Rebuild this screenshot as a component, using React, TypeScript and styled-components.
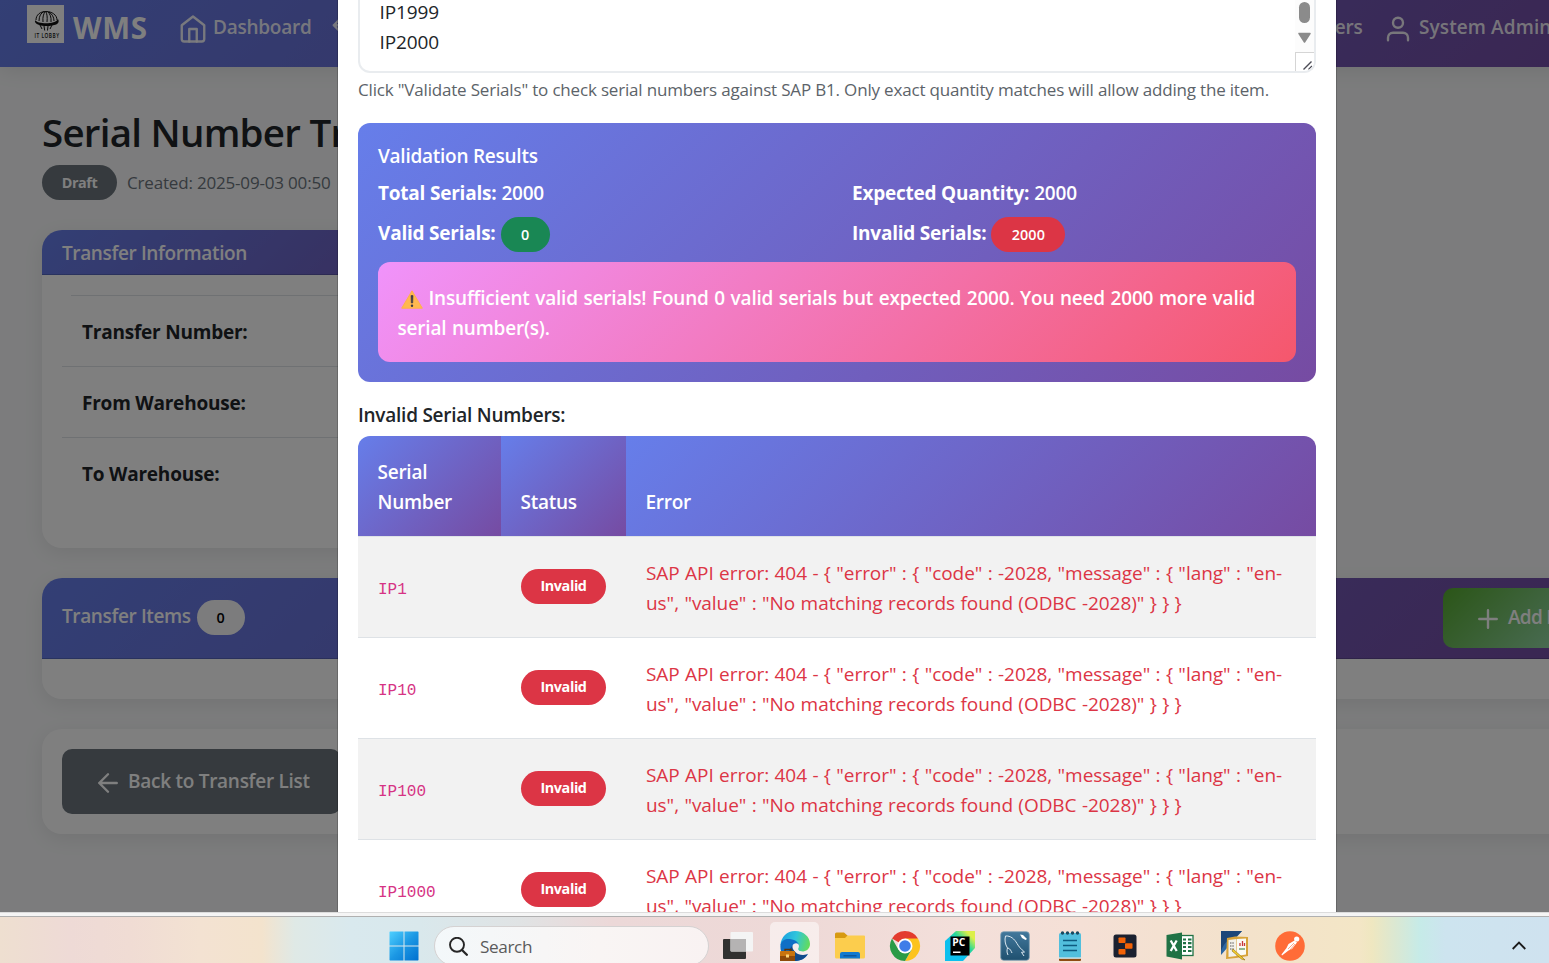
import React from 'react';
import styled, { createGlobalStyle, css } from 'styled-components';

const GlobalStyle = createGlobalStyle`
  * { box-sizing: border-box; }
  html, body { margin: 0; padding: 0; overflow: hidden; }
  body {
    font-family: 'Segoe UI', 'Open Sans', 'Noto Sans', sans-serif;
    font-size: 19px;
    line-height: 30px;
    color: #212529;
  }
`;

const brand = 'linear-gradient(135deg, #667eea 0%, #764ba2 100%)';

const Desktop = styled.div`
  display: flex;
  flex-direction: column;
  width: 1549px;
  height: 963px;
  overflow: hidden;
`;

const BrowserView = styled.div`
  position: relative;
  height: 912px;
  flex: none;
  overflow: hidden;
`;

const Page = styled.div`
  width: 1674px;
  height: 912px;
  background: #f8f9fa;
`;

/* ---------- navigation ---------- */

const Navbar = styled.nav`
  display: flex;
  align-items: flex-start;
  height: 67px;
  padding: 5px 27px;
  background: ${brand};
  box-shadow: 0 2px 20px rgba(0, 0, 0, 0.1);
  color: #fff;
`;

const Brand = styled.div`
  display: flex;
  gap: 9px;
  width: 151px;
  font-size: 29.5px;
  font-weight: 700;
  line-height: 46px;
  letter-spacing: 0.7px;
  white-space: nowrap;
`;

const NavItem = styled.div<{ $w: number }>`
  display: flex;
  flex: none;
  align-items: center;
  gap: 5px;
  width: ${(p) => p.$w}px;
  height: 43px;
  color: rgba(255, 255, 255, 0.9);
  font-weight: 600;
  letter-spacing: -0.25px;
  white-space: nowrap;
  svg { margin-top: 5px; flex: none; }
`;

const AccountItem = styled(NavItem)`
  gap: 6px;
  letter-spacing: 0.1px;
`;

const NavSpacer = styled.div`
  flex: 1;
`;

/* ---------- page content ---------- */

const Content = styled.main`
  padding: 41px 42px 0;
`;

const Title = styled.h1`
  margin: 0;
  height: 57px;
  font-size: 38.5px;
  font-weight: 600;
  line-height: 48px;
  letter-spacing: -0.75px;
`;

const Meta = styled.div`
  display: flex;
  align-items: center;
  gap: 10px;
  height: 35px;
  margin-bottom: 30px;
  color: #6c757d;
  font-size: 17px;
  letter-spacing: -0.18px;
`;

const Badge = styled.span<{ $bg: string; $fg?: string; $w: number }>`
  display: inline-flex;
  flex: none;
  align-items: center;
  justify-content: center;
  width: ${(p) => p.$w}px;
  height: 35px;
  border-radius: 18px;
  background: ${(p) => p.$bg};
  color: ${(p) => p.$fg ?? '#fff'};
  font-size: 14.4px;
  font-weight: 700;
  letter-spacing: -0.4px;
`;

const CountBadge = styled(Badge)`
  padding-top: 1px;
  font-weight: 600;
  letter-spacing: 0.1px;
`;

const Card = styled.section<{ $w?: number; $h: number }>`
  width: ${(p) => (p.$w ? `${p.$w}px` : '100%')};
  height: ${(p) => p.$h}px;
  margin-bottom: 30px;
  overflow: hidden;
  border-radius: 20px;
  background: #fff;
  box-shadow: 0 5px 20px rgba(0, 0, 0, 0.08);
`;

const CardHeader = styled.header<{ $h: number }>`
  display: flex;
  align-items: center;
  justify-content: space-between;
  height: ${(p) => p.$h}px;
  padding: 0 20px;
  border-bottom: 1px solid rgba(0, 0, 0, 0.18);
  background: ${brand};
  color: #fff;
  font-weight: 600;
  letter-spacing: -0.37px;
`;

const HeaderLabel = styled.div<{ $tall?: boolean }>`
  display: flex;
  align-items: center;
  gap: 6px;
  padding: ${(p) => (p.$tall ? '0 0 4px' : '2px 0 0')};
  ${CountBadge} { margin-top: 3px; }
`;

const InfoList = styled.dl`
  margin: 0;
  padding: 20px 20px 0;
`;

const InfoRow = styled.div<{ $first?: boolean; $last?: boolean }>`
  height: 71px;
  padding: 21px 20px 19px;
  border-bottom: ${(p) => (p.$last ? 'none' : '1px solid #dee2e6')};
  font-weight: 700;
  letter-spacing: -0.22px;
  ${(p) =>
    p.$first &&
    css`
      height: 72px;
      background: linear-gradient(#dee2e6, #dee2e6) 9px 0 / 100% 1px no-repeat;
      padding-top: 22px;
    `}
`;

const Button = styled.button<{ $bg: string; $w: number; $h: number; $tight?: boolean }>`
  display: flex;
  align-items: center;
  gap: 5px;
  width: ${(p) => p.$w}px;
  height: ${(p) => p.$h}px;
  padding: 0 0 2px ${(p) => (p.$tight ? 30 : 31)}px;
  border: 0;
  border-radius: 10px;
  background: ${(p) => p.$bg};
  color: #fff;
  font: inherit;
  font-weight: 600;
  letter-spacing: ${(p) => (p.$tight ? -0.75 : -0.27)}px;
  white-space: nowrap;
  svg { margin-top: 4px; flex: none; }
`;

const Actions = styled.div`
  padding: 20px;
`;

/* ---------- modal ---------- */

const Backdrop = styled.div`
  position: absolute;
  inset: 0;
  width: 1674px;
  display: flex;
  justify-content: center;
  background: rgba(0, 0, 0, 0.5);
`;

const Modal = styled.div`
  width: 1000px;
  height: 100%;
  padding: 0 20px;
  border: solid rgba(0, 0, 0, 0.175);
  border-width: 0 1px;
  background: #fff;
  background-clip: padding-box;
  overflow: hidden;
`;

const SerialInput = styled.div`
  display: flex;
  justify-content: space-between;
  height: 73px;
  border: 2px solid #e9ecef;
  border-top: 0;
  border-radius: 0 0 12px 12px;
  overflow: hidden;
`;

const SerialLines = styled.div`
  padding: 0 0 0 19.5px;
  margin-top: -3px;
  letter-spacing: -0.12px;
`;

const Scroll = styled.div`
  display: flex;
  flex-direction: column;
  width: 19px;
  background: #fcfcfc;
  svg { display: block; }
`;

const HelpText = styled.p`
  margin: 2px 0 18px;
  font-size: 17px;
  line-height: 30px;
  color: #5c6369;
  letter-spacing: -0.18px;
  white-space: nowrap;
`;

const ResultPanel = styled.section`
  height: 259px;
  padding: 18px 20px 0;
  border-radius: 12px;
  background: ${brand};
  color: #fff;
`;

const PanelTitle = styled.h6`
  margin: 0 0 7px;
  font-size: 19px;
  font-weight: 600;
  line-height: 30px;
  letter-spacing: -0.25px;
`;

const Stats = styled.div`
  display: grid;
  grid-template-columns: 474px 1fr;
  grid-template-rows: 35px 49px;
  font-weight: 600;
`;

const Stat = styled.div`
  display: flex;
  align-items: center;
  gap: 5px;
  height: 30px;
  letter-spacing: -0.22px;
  white-space: nowrap;
  b { font-weight: 700; }
  &:nth-child(n + 3) { margin-top: 5px; }
  ${CountBadge} { margin-top: 2px; }
`;

const Alert = styled.div`
  width: 918px;
  height: 100px;
  padding: 21px 19.5px;
  border-radius: 12px;
  background: linear-gradient(135deg, #f093fb 0%, #f5576c 100%);
  font-weight: 600;
  letter-spacing: -0.2px;
  word-spacing: 0.9px;
  white-space: nowrap;
  svg { margin: 0 6px 0 3px; vertical-align: -4px; }
`;

const SectionTitle = styled(PanelTitle)`
  margin: 18px 0 6px;
`;

const Table = styled.div`
  border-radius: 12px 12px 0 0;
  overflow: hidden;
`;

const TableRow = styled.div<{ $striped?: boolean }>`
  display: grid;
  grid-template-columns: 143px 125px 690px;
  align-items: center;
  height: 101px;
  border-bottom: 1px solid #dee2e6;
  background: ${(p) => (p.$striped ? '#f2f2f2' : '#fff')};
`;

const HeadCell = styled.div`
  display: flex;
  align-items: flex-end;
  height: 100px;
  padding: 0 19.5px 19px;
  background: ${brand};
  color: #fff;
  font-weight: 600;
  letter-spacing: -0.25px;
`;

const Cell = styled.div`
  padding: 0 0 2px 20px;
`;

const Code = styled.code`
  position: relative;
  top: 2px;
  color: #d63384;
  font-family: 'Liberation Mono', monospace;
  font-size: 16px;
`;

const ErrorText = styled.div`
  padding: 2px 0 0 20px;
  color: #dc3545;
  letter-spacing: -0.05px;
  word-spacing: 0.5px;
  white-space: nowrap;
`;

/* ---------- windows taskbar ---------- */

const WindowEdge = styled.div`
  flex: none;
  height: 5px;
  border-top: 1px solid #dcdcdc;
  border-bottom: 1px solid #b0b0b0;
  background: #f5f5f5;
`;

const Taskbar = styled.footer`
  display: flex;
  flex: none;
  align-items: flex-start;
  height: 46px;
  padding-left: 380px;
  overflow: hidden;
  background: linear-gradient(
    90deg,
    #eedfd0 0,
    #eedad6 70px,
    #f0dcd4 130px,
    #f3e2d2 200px,
    #f3e3cd 262px,
    #dfe9e6 295px,
    #d9e9ee 350px,
    #d9e8ec 420px,
    #e0e3e4 520px,
    #ecd8d8 610px,
    #eed9d7 800px,
    #f3dfda 960px,
    #f5e0d6 1080px,
    #f3e2cb 1250px,
    #f3e6c6 1360px,
    #efe7c0 1372px,
    #dbe8d2 1395px,
    #c6ebe8 1420px,
    #cde4ef 1445px,
    #cfe2ef 1549px
  );
`;

const Slot = styled.div<{ $w?: number; $active?: boolean }>`
  display: flex;
  flex: none;
  justify-content: center;
  width: ${(p) => p.$w ?? 55}px;
  height: 46px;
  padding-top: 14px;
  svg { display: block; flex: none; overflow: visible; }
`;

const ActiveSlot = styled(Slot)`
  width: 49px;
  margin: 5px 3px 0;
  padding-top: 9px;
  border-radius: 5px 5px 0 0;
  background: rgba(255, 255, 255, 0.5);
`;

const SearchBox = styled.div`
  display: flex;
  flex: none;
  align-items: center;
  gap: 12px;
  width: 275px;
  height: 40px;
  margin: 9px 0 0 7px;
  padding: 1px 0 0 14px;
  border: 1px solid #d5d2d2;
  border-radius: 20px;
  background: linear-gradient(90deg, #f3f8fa, #f9f5f4 60%, #f9f2f2);
  color: #5b5b5b;
  font-size: 17.2px;
  letter-spacing: -0.4px;
`;

const Tray = styled.div`
  margin: 24px 23px 0 auto;
  svg { display: block; }
`;

/* ---------- icons ---------- */

const Stroke = ({ children, size = 30 }: { children: React.ReactNode; size?: number }) => (
  <svg width={size} height={size} viewBox="0 0 24 24" fill="none" stroke="currentColor" strokeWidth="1.9" strokeLinecap="round" strokeLinejoin="round">
    {children}
  </svg>
);

const HomeIcon = () => (
  <Stroke>
    <path d="M3 9l9-7 9 7v11a2 2 0 0 1-2 2H5a2 2 0 0 1-2-2z" />
    <path d="M9 22V12h6v10" />
  </Stroke>
);
const UserIcon = () => (
  <Stroke>
    <path d="M20 21v-2a4 4 0 0 0-4-4H8a4 4 0 0 0-4 4v2" />
    <circle cx="12" cy="7" r="4" />
  </Stroke>
);
const PlusIcon = () => (
  <Stroke>
    <path d="M12 5v14M5 12h14" />
  </Stroke>
);
const BackIcon = () => (
  <Stroke>
    <path d="M19 12H5M12 19l-7-7 7-7" />
  </Stroke>
);
const TransferIcon = () => (
  <Stroke>
    <path d="M7 5L3 9l4 4M3 9h14M17 13l4 4-4 4M21 17H8" />
  </Stroke>
);

const Logo = () => (
  <svg width="37" height="38" viewBox="0 0 37 38">
    <rect width="37" height="38" fill="#fff" />
    <g fill="none" stroke="#111" strokeWidth="1">
      <path d="M9 15c0-5 4-8.500 10-8.500S30 10 30 15" />
      <path d="M12 16c0-5 2-8 5-9.500M16 17c-.5-5 .5-8 2-10M20 17c.5-5 0-8-1-10M24 17c.5-5-1-8-3-10M27 16c0-4-2-7-5-9" />
      <path d="M13 20l2 4M17 21l.7 4.500M21 21l-.5 4.500M25 20l-2 4" />
    </g>
    <path d="M8 15c2 4 20 5 23-1 3 5-4 7-11 7S7 19 8 15z" fill="#111" />
    <text x="7.500" y="33" fontSize="6.500" fontWeight="600" fontFamily="Open Sans, sans-serif" textLength="25" lengthAdjust="spacingAndGlyphs" fill="#111">
      IT LOBBY
    </text>
  </svg>
);

const WarningIcon = () => (
  <svg width="22" height="19" viewBox="0 0 22 19">
    <path d="M11 .8L21.300 18.200H.7z" fill="#ffb84f" stroke="#ffb04a" strokeWidth="1" strokeLinejoin="round" />
    <path d="M10 5.500h2l-.3 7.500h-1.400z" fill="#3f3a48" stroke="#3f3a48" strokeWidth=".6" />
    <circle cx="11" cy="15.700" r="1.200" fill="#3f3a48" />
  </svg>
);

const ScrollParts = () => (
  <svg width="19" height="71" viewBox="0 0 19 71">
    <rect x="4" y="2" width="11" height="21" rx="5.500" fill="#8b8b8b" />
    <path d="M4 33.500h11l-5.500 8.500z" fill="#8b8b8b" stroke="#8b8b8b" strokeWidth="1.500" strokeLinejoin="round" />
    <path d="M0 52.500h19M.5 52v19" stroke="#d5d5d5" fill="none" />
    <rect x="1" y="53" width="18" height="18" fill="#fff" />
    <path d="M8.500 69.500l8-8M13.500 69.500l3.500-3.500" stroke="#4b4b55" strokeWidth="1.400" />
  </svg>
);

const StartIcon = () => (
  <svg width="30" height="30" viewBox="0 0 30 30">
    <defs>
      <linearGradient id="win" x1="0" y1="0" x2="1" y2="1">
        <stop offset="0" stopColor="#4fd0ff" />
        <stop offset=".5" stopColor="#1c98e4" />
        <stop offset="1" stopColor="#0070cf" />
      </linearGradient>
    </defs>
    <path d="M1 .5h13.500v14H.5V1zM15.500.5H29l.5.5v13.500h-14zM.5 15.500h14v14H1l-.5-.5zM15.500 15.500h14V29l-.5.5H15.500z" fill="url(#win)" />
  </svg>
);

const SearchIcon = () => (
  <svg width="19" height="19" viewBox="0 0 19 19" fill="none" stroke="#262626" strokeLinecap="round">
    <circle cx="8" cy="7.800" r="7" strokeWidth="1.900" />
    <path d="M13 13l4.800 4.800" strokeWidth="2.300" />
  </svg>
);

const TaskViewIcon = () => (
  <svg width="30" height="30" viewBox="0 0 30 30">
    <rect x="0" y="8" width="23" height="20" rx="1" fill="#31302f" />
    <rect x="7.500" y="1" width="22.500" height="19.500" rx="1" fill="#f4f4f4" />
    <path d="M7.500 8H23v12.500H8.500a1 1 0 0 1-1-1z" fill="#b5b3b3" />
  </svg>
);

const EdgeIcon = () => (
  <svg width="30" height="30" viewBox="0 0 30 30">
    <defs>
      <linearGradient id="edgeTop" x1="0" y1=".3" x2="1" y2=".5">
        <stop offset="0" stopColor="#1b9fe0" />
        <stop offset=".5" stopColor="#2fc5dc" />
        <stop offset="1" stopColor="#63dc5c" />
      </linearGradient>
    </defs>
    <path d="M.5 14C1 6 7 0 15 0c9 0 15 6 15 13 0 5-4 7.500-8 7.500-5 0-6-3-9-2z" fill="url(#edgeTop)" />
    <path d="M.4 15C1 9 6 7.500 10 8c6 .7 9.500 4 9 8l-5 0c-1 5 3 9 8 9 2.500 0 4.500-.8 6-2-3 5-8 7-13 7C7 30 0 24 .4 15z" fill="#0f6fc6" />
    <path d="M14 14c-2 6 3 10 9 10 2.500 0 4-.6 5-1.200C25 28 20 30 15 30c-8-2-8-13-1-16z" fill="#114a8b" />
    <path d="M12.500 15c.5-3.500 6.500-4 6.500 0 0 2-1.500 2.500-.5 4 .8 1 2.500 1.600 4.500 1.600-5 1.500-11 0-10.500-5.600z" fill="#f5eded" />
    <path d="M5 20v-1.500h6V20" fill="none" stroke="#5b3209" strokeWidth="1.300" />
    <rect x="0" y="20" width="15" height="10" rx="1" fill="#c9740f" />
    <rect x="0" y="25" width="15" height="5" fill="#8e4a0a" />
    <rect x="6" y="23.500" width="3" height="3" fill="#ffd476" />
  </svg>
);

const FolderIcon = () => (
  <svg width="30" height="30" viewBox="0 0 30 30">
    <path d="M0 3a1.500 1.500 0 0 1 1.500-1.500H9L13 5v5H0z" fill="#d79a11" />
    <path d="M0 7h10l2.500-2.500H29a1 1 0 0 1 1 1V26a1.500 1.500 0 0 1-1.500 1.500h-27A1.500 1.500 0 0 1 0 26z" fill="#fccd4d" />
    <path d="M5 27.500V23a2 2 0 0 1 2-2h16a2 2 0 0 1 2 2v4.500z" fill="#1179cf" />
    <path d="M8.500 24.800h13" stroke="#0b4f92" strokeWidth="1.200" />
  </svg>
);

const ChromeIcon = () => (
  <svg width="30" height="30" viewBox="0 0 30 30">
    <path d="M15 15L2 7.500A15 15 0 0 1 28 7.500z" fill="#e33b2e" />
    <path d="M15 15V7.500h13A15 15 0 0 1 15 30l6.500-11.200z" fill="#fcc31e" />
    <path d="M15 15l6.500 3.800L15 30A15 15 0 0 1 2 7.500l6.500 11.300z" fill="#2a9b46" />
    <circle cx="15" cy="15" r="7.500" fill="#fff" />
    <circle cx="15" cy="15" r="5.800" fill="#3f7de8" />
  </svg>
);

const PyCharmIcon = () => (
  <svg width="30" height="30" viewBox="0 0 30 30">
    <defs>
      <linearGradient id="pc" x1="0" y1="1" x2="1" y2="0">
        <stop offset=".4" stopColor="#0cc0ee" />
        <stop offset=".62" stopColor="#24d79a" />
        <stop offset=".85" stopColor="#dcef4a" />
      </linearGradient>
    </defs>
    <path d="M11 0h19v17L18 30H0V10z" fill="url(#pc)" />
    <rect x="5.500" y="5.500" width="19" height="19" fill="#000" />
    <text x="7.200" y="15.200" fontSize="10" fontWeight="700" fontFamily="Open Sans, sans-serif" textLength="13" lengthAdjust="spacingAndGlyphs" fill="#fff">PC</text>
    <rect x="8" y="20.500" width="7.500" height="1.500" fill="#fff" />
  </svg>
);

const MySqlIcon = () => (
  <svg width="30" height="30" viewBox="0 0 30 30">
    <defs>
      <linearGradient id="sql" x1="0" y1="0" x2="0" y2="1">
        <stop offset="0" stopColor="#42789c" />
        <stop offset="1" stopColor="#1f506f" />
      </linearGradient>
    </defs>
    <rect x=".7" y=".7" width="28.600" height="28.600" rx="3" fill="url(#sql)" stroke="#7fa0b4" strokeWidth=".8" />
    <path d="M8 24c-1.500-3-1-5-.5-7C5 13 4.500 9 5.500 5c5-.5 9 3 11.500 7.500 2 3.500 4 5.500 7.500 8.500l-3 .3 2.500 3.700M8 17c2.500 1 3 3 4 5" fill="none" stroke="#dbe8f0" strokeWidth="1" />
    <path d="M20 3.500l3 .5 4 4-1.500 1-3.500-2z" fill="#fff" />
  </svg>
);

const NotepadIcon = () => (
  <svg width="24" height="30" viewBox="0 0 24 30">
    <path d="M1 27h22v2a1 1 0 0 1-1 1H2a1 1 0 0 1-1-1z" fill="#8f4b12" />
    <rect x="1" y="2" width="22" height="25.500" rx="1.500" fill="#52bfdd" />
    <rect x="1" y="26.500" width="22" height="1.200" fill="#e8eef0" />
    <path d="M5 9.500h14M5 14.500h14M5 19.500h14" stroke="#0e5b80" strokeWidth="1.700" />
    <path d="M4.500 2v.1M9.500 2v.1M14.500 2v.1M19.500 2v.1" stroke="#1a4a61" strokeWidth="3.400" strokeLinecap="round" />
  </svg>
);

const ReplitIcon = () => (
  <svg width="24" height="30" viewBox="0 0 24 30">
    <rect x=".5" y="3.500" width="23" height="23" rx="2.500" fill="#1b2130" />
    <rect x="5.500" y="6.500" width="7" height="5.500" rx=".8" fill="#f26207" />
    <rect x="12" y="12.200" width="7.500" height="5.500" rx=".8" fill="#f26207" />
    <rect x="5.500" y="18" width="7" height="5.500" rx=".8" fill="#f26207" />
  </svg>
);

const ExcelIcon = () => (
  <svg width="28" height="30" viewBox="0 0 28 30">
    <rect x="13" y="4.500" width="14" height="20" fill="#fff" stroke="#207245" strokeWidth="1.300" />
    <path d="M17 8.500h3M22 8.500h3.500M17 12.200h3M22 12.200h3.500M17 16h3M22 16h3.500M17 20h3M22 20h3.500" stroke="#207245" strokeWidth="2.200" />
    <path d="M.5 4L16 1.500v27L.5 25.500z" fill="#207245" />
    <path d="M4.700 9.500l6 10.500M10.700 9.500L4.700 20" stroke="#fff" strokeWidth="2.300" />
  </svg>
);

const DesignerIcon = () => (
  <svg width="30" height="30" viewBox="0 0 30 30">
    <path d="M1 0h21L1 24z" fill="#2c66a3" />
    <path d="M1 0h21l-5 5C9 7 4 12 1 20z" fill="#1c4679" />
    <path d="M7 7l8-1.500 13 .5v19l-12 2-10 1z" fill="#d8a33a" />
    <path d="M8.500 9l8-1v17l-8 1z" fill="#f3f1ea" />
    <path d="M17 8l9-.5v16l-9 1.500z" fill="#fbfaf5" />
    <path d="M10 12h4M10 15h4M10 18h4" stroke="#555" strokeWidth="1" strokeDasharray="1.500 .8" />
    <path d="M20 15v-3M22.500 15v-5M24.500 15v-3" stroke="#c9363a" fill="none" strokeWidth="1.300" />
    <path d="M19 18h6" stroke="#4c8b4c" strokeWidth="1.200" />
    <path d="M13 18l10 9 2 2-3.500-1L12 20z" fill="#f6cf2c" stroke="#8a6a10" strokeWidth=".6" />
  </svg>
);

const PostmanIcon = () => (
  <svg width="30" height="30" viewBox="0 0 30 30">
    <circle cx="15" cy="15" r="14.800" fill="#ff6c37" />
    <circle cx="21.700" cy="8" r="2.600" fill="#fff" />
    <path d="M19.500 9.500l2.500 2-5 6.500-3.500 1.500L7 24.500l-.5-1L11.500 17l2-4z" fill="#fff" />
    <path d="M13 18l6-6M15 19l5-6" stroke="#ff6c37" strokeWidth=".6" />
  </svg>
);

const ChevronUp = () => (
  <svg width="14" height="9" viewBox="0 0 14 9" fill="none" stroke="#1a1a1a" strokeWidth="1.800">
    <path d="M.7 8L7 1.600 13.300 8" />
  </svg>
);

/* ---------- data ---------- */

const failures = ['IP1', 'IP10', 'IP100', 'IP1000'];

export default function App() {
  return (
    <Desktop>
      <GlobalStyle />
      <BrowserView>
        <Page>
          <Navbar>
            <Brand>
              <Logo />
              <span>WMS</span>
            </Brand>
            <NavItem $w={152}>
              <HomeIcon />
              <span>Dashboard</span>
            </NavItem>
            <NavItem $w={200}>
              <TransferIcon />
            </NavItem>
            <NavSpacer />
            <NavItem $w={71}>Users</NavItem>
            <AccountItem $w={264}>
              <UserIcon />
              System Administrator
            </AccountItem>
          </Navbar>
          <Content>
            <Title>Serial Number Transfer</Title>
            <Meta>
              <Badge $bg="#6c757d" $w={75}>Draft</Badge>
              <span>Created: 2025-09-03 00:50</span>
            </Meta>
            <Card $w={600} $h={318}>
              <CardHeader $h={45}>
                <HeaderLabel>Transfer Information</HeaderLabel>
              </CardHeader>
              <InfoList>
                <InfoRow $first>Transfer Number:</InfoRow>
                <InfoRow>From Warehouse:</InfoRow>
                <InfoRow $last>To Warehouse:</InfoRow>
              </InfoList>
            </Card>
            <Card $h={121}>
              <CardHeader $h={81}>
                <HeaderLabel $tall>
                  Transfer Items
                  <CountBadge $bg="#f8f9fa" $fg="#000" $w={48}>0</CountBadge>
                </HeaderLabel>
                <Button $bg="linear-gradient(135deg, #56ab2f 0%, #a8e6cf 100%)" $w={169} $h={60} $tight>
                  <PlusIcon />
                  Add Item
                </Button>
              </CardHeader>
            </Card>
            <Card $h={105}>
              <Actions>
                <Button $bg="#6c757d" $w={279} $h={65}>
                  <BackIcon />
                  Back to Transfer List
                </Button>
              </Actions>
            </Card>
          </Content>
        </Page>
        <Backdrop>
          <Modal>
            <SerialInput>
              <SerialLines>
                <div>IP1999</div>
                <div>IP2000</div>
              </SerialLines>
              <Scroll>
                <ScrollParts />
              </Scroll>
            </SerialInput>
            <HelpText>
              Click "Validate Serials" to check serial numbers against SAP B1. Only exact quantity matches will allow adding the item.
            </HelpText>
            <ResultPanel>
              <PanelTitle>Validation Results</PanelTitle>
              <Stats>
                <Stat><b>Total Serials:</b> 2000</Stat>
                <Stat><b>Expected Quantity:</b> 2000</Stat>
                <Stat><b>Valid Serials:</b> <CountBadge $bg="#198754" $w={49}>0</CountBadge></Stat>
                <Stat><b>Invalid Serials:</b> <CountBadge $bg="#dc3545" $w={74}>2000</CountBadge></Stat>
              </Stats>
              <Alert>
                <WarningIcon />
                Insufficient valid serials! Found 0 valid serials but expected 2000. You need 2000 more valid
                <br />
                serial number(s).
              </Alert>
            </ResultPanel>
            <SectionTitle>Invalid Serial Numbers:</SectionTitle>
            <Table>
              <TableRow>
                <HeadCell>Serial<br />Number</HeadCell>
                <HeadCell>Status</HeadCell>
                <HeadCell>Error</HeadCell>
              </TableRow>
              {failures.map((serial, i) => (
                <TableRow key={serial} $striped={i % 2 === 0}>
                  <Cell><Code>{serial}</Code></Cell>
                  <Cell><Badge $bg="#dc3545" $w={85}>Invalid</Badge></Cell>
                  <ErrorText>
                    {'SAP API error: 404 - { "error" : { "code" : -2028, "message" : { "lang" : "en-'}
                    <br />
                    {'us", "value" : "No matching records found (ODBC -2028)" } } }'}
                  </ErrorText>
                </TableRow>
              ))}
            </Table>
          </Modal>
        </Backdrop>
      </BrowserView>
      <WindowEdge />
      <Taskbar>
        <Slot $w={47}><StartIcon /></Slot>
        <SearchBox>
          <SearchIcon />
          Search
        </SearchBox>
        <Slot $w={58}><TaskViewIcon /></Slot>
        <ActiveSlot><EdgeIcon /></ActiveSlot>
        <Slot><FolderIcon /></Slot>
        <Slot><ChromeIcon /></Slot>
        <Slot><PyCharmIcon /></Slot>
        <Slot><MySqlIcon /></Slot>
        <Slot><NotepadIcon /></Slot>
        <Slot><ReplitIcon /></Slot>
        <Slot><ExcelIcon /></Slot>
        <Slot><DesignerIcon /></Slot>
        <Slot><PostmanIcon /></Slot>
        <Tray><ChevronUp /></Tray>
      </Taskbar>
    </Desktop>
  );
}
